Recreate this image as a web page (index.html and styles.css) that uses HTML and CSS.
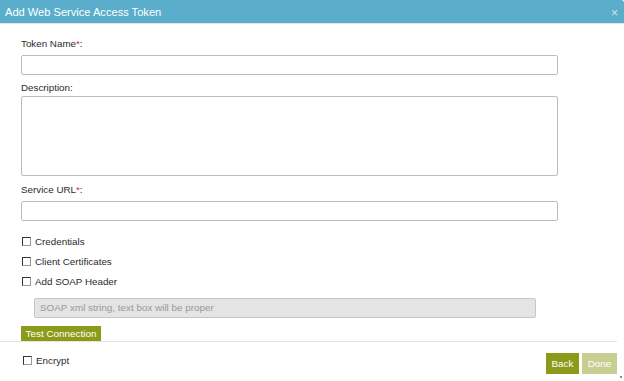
FILE: index.html
```html
<!DOCTYPE html>
<html>
<head>
    <title>Add Web Service Access Token</title>
<link rel="stylesheet" href="styles.css">
</head>
<body>
  <div class="dialog">
    <div class="header">
      <span class="title">Add Web Service Access Token</span>
      <span class="close">&#215;</span>
    </div>
    <div class="content">
      <label class="field-label token-label">Token Name<span class="req">*</span>:</label>
      <div class="input-field"></div>
      <label class="field-label desc-label">Description:</label>
      <div class="input-field textarea"></div>
      <label class="field-label url-label">Service URL<span class="req">*</span>:</label>
      <div class="input-field"></div>
      <div class="checks">
        <div class="check-row"><span class="box"></span>Credentials</div>
        <div class="check-row"><span class="box"></span>Client Certificates</div>
        <div class="check-row"><span class="box"></span>Add SOAP Header</div>
      </div>
      <div class="soap-field">SOAP xml string, text box will be proper</div>
      <button type="button" class="btn test-btn">Test Connection</button>
    </div>
    <div class="footer">
      <div class="check-row encrypt"><span class="box"></span>Encrypt</div>
      <div class="actions">
        <button type="button" class="btn back-btn">Back</button>
        <button type="button" class="btn done-btn disabled">Done</button>
      </div>
    </div>
    <span class="grip"></span>
  </div>
</body>
</html>
```

FILE: styles.css
```css
body {
  margin: 0;
  font-family: "Liberation Sans", Arial, sans-serif;
  font-size: 9.8px;
  color: #2b2b2b;
  background: #fff;
}
.dialog {
  position: relative;
  width: 624px;
  height: 381px;
  display: flex;
  flex-direction: column;
  overflow: hidden;
}
.header {
  height: 23px;
  flex: none;
  background-color: #5aaecb;
  border-bottom: 1px solid #e4e4e4;
  display: flex;
  align-items: center;
  justify-content: space-between;
  padding: 0 6px 0 5px;
  border-top-right-radius: 3px;
}
.title {
  color: #fff;
  font-size: 11.1px;
}
.close {
  color: #cfe6ef;
  font-size: 12px;
  margin-top: 2px;
}
.content {
  width: 596px;
  height: 317px;
  flex: none;
  overflow: hidden;
  padding: 0 0 0 21px;
}
.field-label {
  display: block;
  height: 14px;
  line-height: 14px;
}
.token-label {
  margin-top: 13px;
  margin-bottom: 4px;
}
.desc-label {
  margin-top: 6px;
  margin-bottom: 1px;
}
.url-label {
  margin-top: 7px;
  margin-bottom: 4px;
}
.req {
  color: #e02020;
}
.input-field {
  width: 535px;
  height: 18px;
  border: 1px solid #bcbcbc;
  border-radius: 2px;
  background: #fff;
}
.textarea {
  height: 78px;
}
.checks {
  margin-top: 10px;
}
.check-row {
  height: 20px;
  display: flex;
  align-items: center;
}
.box {
  width: 7px;
  height: 7px;
  border: 1px solid #333;
  border-right-color: #999;
  border-bottom-color: #999;
  margin: 0 4px 0 1px;
  background: #fff;
}
.soap-field {
  margin: 7px 0 0 13px;
  width: 495px;
  height: 18px;
  line-height: 18px;
  padding-left: 5px;
  border: 1px solid #c6c6c6;
  border-radius: 2px;
  background: #e4e4e4;
  color: #999;
  font-size: 9.9px;
}
.btn {
  border: none;
  background-color: #8b9b19;
  color: #fff;
  font-family: "Liberation Sans", Arial, sans-serif;
  font-size: 9.9px;
  height: 21px;
  padding: 0;
  margin: 0;
}
.test-btn {
  margin-top: 8px;
  width: 80px;
  padding: 0 0 6px;
  display: block;
}
.back-btn {
  width: 33px;
}
.done-btn {
  width: 35px;
}
.btn.disabled {
  background-color: #c6ce92;
}
.footer {
  width: 617px;
  flex: 1;
  border-top: 1px solid #e3e3e3;
  display: flex;
  justify-content: space-between;
  align-items: flex-start;
}
.encrypt {
  margin: 8px 0 0 22px;
}
.actions {
  display: flex;
  gap: 3px;
  margin-top: 11px;
}
.grip {
  position: absolute;
  right: 2px;
  bottom: 3px;
  width: 2px;
  height: 2px;
  background: #888;
}
```
